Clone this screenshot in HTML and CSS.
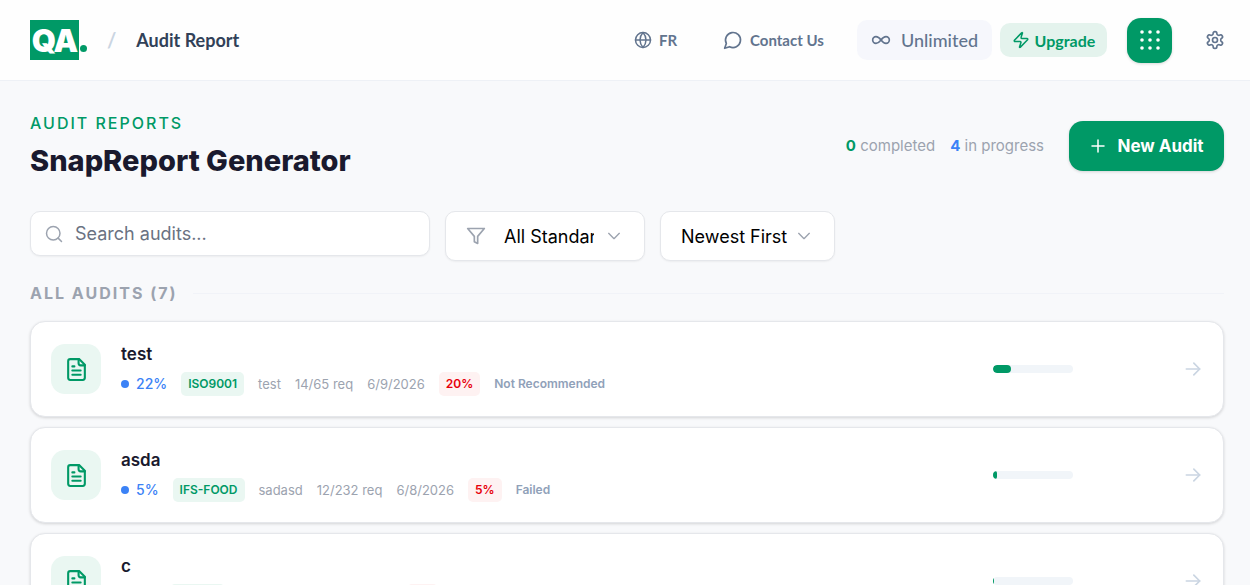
FILE: index.html
```html
<!DOCTYPE html>
<html lang="en">
<head>
    <meta charset="UTF-8">
    <meta name="viewport" content="width=device-width, initial-scale=1.0">
    <title>Audit Report</title>
    <link rel="stylesheet" href="styles.css">
</head>
<body>

    <!-- shared icons -->
    <svg class="sprite" aria-hidden="true">
        <symbol id="icon-file" viewBox="0 0 24 24">
            <path d="M14.5 2H6a2 2 0 0 0-2 2v16a2 2 0 0 0 2 2h12a2 2 0 0 0 2-2V7.500z"/>
            <path d="M14 2v4a2 2 0 0 0 2 2h4"/>
            <path d="M10 9H8"/>
            <path d="M16 13H8"/>
            <path d="M16 17H8"/>
        </symbol>
        <symbol id="icon-arrow" viewBox="0 0 24 24">
            <path d="M4 12h16"/>
            <path d="m13 5 7 7-7 7"/>
        </symbol>
        <symbol id="icon-chevron" viewBox="0 0 24 24">
            <path d="m4 8 8 8 8-8"/>
        </symbol>
    </svg>

    <header class="topbar">
        <a href="#" class="logo"><span class="logo-box">QA</span><span class="logo-dot"></span></a>
        <span class="slash">/</span>
        <span class="crumb">Audit Report</span>

        <nav class="topnav">
            <button type="button" class="nav-link lang">
                <svg class="icon" viewBox="0 0 24 24"><circle cx="12" cy="12" r="10"/><path d="M2 12h20"/><path d="M12 2a15 15 0 0 1 4 10 15 15 0 0 1-4 10 15 15 0 0 1-4-10 15 15 0 0 1 4-10z"/></svg>
                FR
            </button>
            <a href="#" class="nav-link contact">
                <svg class="icon" viewBox="0 0 24 24"><path d="M7.900 20A9 9 0 1 0 4 16.100L2 22Z"/></svg>
                Contact Us
            </a>
            <span class="plan">
                <svg class="icon" viewBox="0 0 24 24"><path d="M12 12c-2-2.670-4-4-6-4a4 4 0 1 0 0 8c2 0 4-1.330 6-4Zm0 0c2 2.670 4 4 6 4a4 4 0 0 0 0-8c-2 0-4 1.330-6 4Z"/></svg>
                Unlimited
            </span>
            <button type="button" class="upgrade">
                <svg class="icon" viewBox="0 0 24 24"><path d="M4 14a1 1 0 0 1-.780-1.630l9.900-10.200a.5.5 0 0 1 .860.460l-1.920 6.020A1 1 0 0 0 13 10h7a1 1 0 0 1 .780 1.630l-9.900 10.200a.5.5 0 0 1-.860-.460l1.920-6.020A1 1 0 0 0 11 14z"/></svg>
                Upgrade
            </button>
            <button type="button" class="apps" aria-label="Apps">
                <svg viewBox="0 0 20 20">
                    <circle cx="2" cy="2" r="1.800"/><circle cx="10" cy="2" r="1.800"/><circle cx="18" cy="2" r="1.800"/>
                    <circle cx="2" cy="10" r="1.800"/><circle cx="10" cy="10" r="1.800"/><circle cx="18" cy="10" r="1.800"/>
                    <circle cx="2" cy="18" r="1.800"/><circle cx="10" cy="18" r="1.800"/><circle cx="18" cy="18" r="1.800"/>
                </svg>
            </button>
            <button type="button" class="settings" aria-label="Settings">
                <svg class="icon" viewBox="0 0 24 24"><path d="M12.220 2h-.440a2 2 0 0 0-2 2v.180a2 2 0 0 1-1 1.730l-.430.250a2 2 0 0 1-2 0l-.150-.080a2 2 0 0 0-2.730.730l-.220.380a2 2 0 0 0 .730 2.730l.150.100a2 2 0 0 1 1 1.720v.510a2 2 0 0 1-1 1.740l-.150.090a2 2 0 0 0-.730 2.730l.220.380a2 2 0 0 0 2.730.730l.150-.080a2 2 0 0 1 2 0l.430.250a2 2 0 0 1 1 1.730V20a2 2 0 0 0 2 2h.440a2 2 0 0 0 2-2v-.180a2 2 0 0 1 1-1.730l.430-.250a2 2 0 0 1 2 0l.150.080a2 2 0 0 0 2.730-.730l.220-.390a2 2 0 0 0-.730-2.730l-.150-.080a2 2 0 0 1-1-1.740v-.500a2 2 0 0 1 1-1.740l.150-.090a2 2 0 0 0 .730-2.730l-.220-.380a2 2 0 0 0-2.730-.730l-.150.080a2 2 0 0 1-2 0l-.430-.250a2 2 0 0 1-1-1.730V4a2 2 0 0 0-2-2z"/><circle cx="12" cy="12" r="3"/></svg>
            </button>
        </nav>
    </header>

    <main>
        <div class="page-head">
            <div>
                <p class="eyebrow">Audit Reports</p>
                <h1>SnapReport Generator</h1>
            </div>
            <div class="head-actions">
                <span class="stat"><b class="done">0</b> completed</span>
                <span class="stat"><b class="progress">4</b> in progress</span>
                <button type="button" class="new-audit">
                    <svg class="icon" viewBox="0 0 24 24"><path d="M4 12h16M12 4v16"/></svg>
                    New Audit
                </button>
            </div>
        </div>

        <div class="filters">
            <label class="search">
                <svg class="icon" viewBox="0 0 24 24"><circle cx="11" cy="11" r="9"/><path d="m22 22-4.500-4.500"/></svg>
                <input type="text" placeholder="Search audits..." aria-label="Search audits">
            </label>
            <label class="select standard">
                <svg class="icon filter-icon" viewBox="0 0 24 24"><path d="M22 3H2l8 9.460V19l4 2v-8.540z"/></svg>
                <select aria-label="Standard">
                    <option>All Standards</option>
                </select>
                <svg class="icon chevron"><use href="#icon-chevron"/></svg>
            </label>
            <label class="select sort">
                <select aria-label="Sort order">
                    <option>Newest First</option>
                </select>
                <svg class="icon chevron"><use href="#icon-chevron"/></svg>
            </label>
        </div>

        <h2>All Audits (7)</h2>

        <div class="audit-list">
            <article class="audit">
                <div class="audit-icon"><svg class="icon"><use href="#icon-file"/></svg></div>
                <div class="audit-info">
                    <h3>test</h3>
                    <div class="meta">
                        <span class="percent">22%</span>
                        <span class="tag">ISO9001</span>
                        <span>test</span>
                        <span>14/65 req</span>
                        <span>6/9/2026</span>
                        <span class="tag score">20%</span>
                        <span class="verdict">Not Recommended</span>
                    </div>
                </div>
                <div class="bar"><div class="bar-fill" style="width: 22%"></div></div>
                <svg class="icon arrow"><use href="#icon-arrow"/></svg>
            </article>

            <article class="audit">
                <div class="audit-icon"><svg class="icon"><use href="#icon-file"/></svg></div>
                <div class="audit-info">
                    <h3>asda</h3>
                    <div class="meta">
                        <span class="percent">5%</span>
                        <span class="tag">IFS-FOOD</span>
                        <span>sadasd</span>
                        <span>12/232 req</span>
                        <span>6/8/2026</span>
                        <span class="tag score">5%</span>
                        <span class="verdict">Failed</span>
                    </div>
                </div>
                <div class="bar"><div class="bar-fill" style="width: 5%"></div></div>
                <svg class="icon arrow"><use href="#icon-arrow"/></svg>
            </article>

            <article class="audit">
                <div class="audit-icon"><svg class="icon"><use href="#icon-file"/></svg></div>
                <div class="audit-info">
                    <h3>c</h3>
                    <div class="meta">
                        <span class="percent">1%</span>
                        <span class="tag">BRCGS</span>
                        <span>c</span>
                        <span>2/230 req</span>
                        <span>6/8/2026</span>
                        <span class="tag score">1%</span>
                    </div>
                </div>
                <div class="bar"><div class="bar-fill" style="width: 1%"></div></div>
                <svg class="icon arrow"><use href="#icon-arrow"/></svg>
            </article>
        </div>
    </main>

</body>
</html>
```
FILE: styles.css
```css
* {
    box-sizing: border-box;
}

body {
    margin: 0;
    height: 100vh;
    overflow: hidden;
    font-family: Inter, "Open Sans", sans-serif;
    background-color: #f8f9fb;
    color: #1a1a2e;
}

h1, h2, h3, p {
    margin: 0;
}

button, input, select {
    font-family: inherit;
    border: none;
    padding: 0;
    background: none;
}

button {
    cursor: pointer;
}

a {
    text-decoration: none;
}

.sprite {
    display: none;
}

.icon {
    width: 20px;
    height: 20px;
    flex: none;
    fill: none;
    stroke: currentColor;
    stroke-width: 2;
    stroke-linecap: round;
    stroke-linejoin: round;
}

/* top bar */

.topbar {
    display: flex;
    align-items: center;
    height: 81px;
    padding: 0 25px 0 30px;
    background-color: #fefefe;
    border-bottom: 1px solid #eef1f6;
    font-family: Lato, sans-serif;
}

.logo {
    display: flex;
    align-items: flex-end;
}

.logo-box {
    width: 49px;
    height: 40px;
    background-color: #009966;
    color: #fff;
    font-family: Inter, sans-serif;
    font-size: 31px;
    font-weight: 900;
    line-height: 42px;
    letter-spacing: -1px;
    text-align: center;
}

.logo-dot {
    width: 7px;
    height: 7px;
    margin: 0 0 8px 1px;
    border-radius: 50%;
    background-color: #009966;
}

.slash {
    margin: 0 20px;
    font-size: 20px;
    font-weight: 700;
    color: #cad5e2;
}

.crumb {
    font-size: 18px;
    font-weight: 700;
    color: #314158;
}

.topnav {
    display: flex;
    align-items: center;
    margin-left: auto;
    color: #62748e;
}

.nav-link {
    display: flex;
    align-items: center;
    gap: 7px;
    font-family: inherit;
    font-size: 15px;
    font-weight: 700;
    color: #62748e;
}

.lang {
    width: 89px;
}

.contact {
    width: 134px;
}

.lang .icon {
    width: 18px;
    height: 18px;
}

.plan {
    display: flex;
    align-items: center;
    justify-content: center;
    gap: 10px;
    width: 135px;
    height: 40px;
    border-radius: 10px;
    background-color: #f6f7fc;
    font-size: 18px;
    font-weight: 500;
}

.upgrade {
    display: flex;
    align-items: center;
    justify-content: center;
    gap: 5px;
    width: 107px;
    height: 34px;
    margin-left: 8px;
    border-radius: 10px;
    background-color: #e4f3ed;
    color: #009966;
    font-size: 16px;
    font-weight: 700;
}

.upgrade .icon {
    width: 18px;
    height: 18px;
}

.apps {
    display: flex;
    align-items: center;
    justify-content: center;
    width: 45px;
    height: 45px;
    margin-left: 20px;
    border-radius: 14px;
    background-color: #009966;
    box-shadow: 0 1px 3px rgba(0, 0, 0, 0.15);
}

.apps svg {
    width: 20px;
    height: 20px;
    fill: #fff;
}

.settings {
    display: flex;
    margin-left: 33px;
    color: #62748e;
}

/* page heading */

main {
    padding: 30px 26px 0 30px;
}

.page-head {
    display: flex;
    align-items: center;
    justify-content: space-between;
}

.eyebrow {
    margin-bottom: 7px;
    font-size: 16px;
    font-weight: 500;
    line-height: 24px;
    letter-spacing: 2px;
    text-transform: uppercase;
    color: #009966;
}

h1 {
    font-size: 29px;
    font-weight: 800;
    line-height: 38px;
}

.head-actions {
    display: flex;
    align-items: center;
    gap: 15px;
}

.stat {
    font-size: 15px;
    color: #9ca3af;
}

.done {
    color: #009966;
}

.progress {
    color: #3b82f6;
}

.new-audit {
    display: flex;
    align-items: center;
    justify-content: center;
    gap: 10px;
    width: 155px;
    height: 50px;
    margin-left: 10px;
    border-radius: 14px;
    background-color: #009966;
    box-shadow: 0 1px 3px rgba(0, 0, 0, 0.15);
    color: #fff;
    font-size: 17px;
    font-weight: 700;
}

.new-audit .icon {
    width: 18px;
    height: 18px;
}

/* filters */

.filters {
    display: flex;
    align-items: flex-start;
    gap: 15px;
    margin-top: 31px;
}

.search,
.select {
    display: flex;
    align-items: center;
    border: 1px solid #e5e7eb;
    border-radius: 10px;
    background-color: #fff;
    box-shadow: 0 1px 2px rgba(0, 0, 0, 0.05);
    color: #9ca3af;
}

.search {
    gap: 12px;
    width: 400px;
    height: 45px;
    padding: 0 14px;
}

.search .icon {
    width: 18px;
    height: 18px;
}

.search input {
    flex: 1;
    min-width: 0;
    outline: none;
    font-size: 18px;
    color: #1a1a2e;
}

.search input::placeholder {
    color: #6a7282;
}

.select {
    height: 50px;
    padding: 0 20px;
}

.select select {
    flex: 1;
    min-width: 0;
    appearance: none;
    outline: none;
    font-size: 18px;
    color: #000;
}

.chevron {
    width: 16px;
    height: 16px;
    margin-left: 12px;
    margin-right: 2px;
}

.standard {
    width: 200px;
}

.standard select {
    margin-left: 18px;
}

.sort {
    width: 175px;
}

.sort .chevron {
    margin-left: 8px;
}

/* audit list */

h2 {
    display: flex;
    align-items: center;
    gap: 15px;
    margin: 21px 0 16px;
    font-size: 16px;
    font-weight: 700;
    line-height: 23px;
    letter-spacing: 2px;
    text-transform: uppercase;
    color: #9ca3af;
}

h2::after {
    content: "";
    flex: 1;
    height: 1px;
    background-color: #f1f3f8;
}

.audit-list {
    display: flex;
    flex-direction: column;
    gap: 10px;
}

.audit {
    display: flex;
    align-items: center;
    padding: 20px;
    border: 1px solid #e5e7eb;
    border-radius: 15px;
    background-color: #fff;
    box-shadow: 0 1px 3px rgba(0, 0, 0, 0.15);
}

.audit-icon {
    display: flex;
    align-items: center;
    justify-content: center;
    width: 50px;
    height: 50px;
    border-radius: 14px;
    background-color: #eaf7f2;
    color: #009966;
}

.audit-icon .icon {
    width: 25px;
    height: 25px;
}

.audit-info {
    flex: 1;
    margin-left: 20px;
}

h3 {
    margin-bottom: 5px;
    font-size: 17px;
    font-weight: 600;
    line-height: 25px;
}

.meta {
    display: flex;
    align-items: center;
    gap: 14px;
    font-size: 13px;
    line-height: 24px;
    color: #9ca3af;
}

.percent {
    display: flex;
    align-items: center;
    gap: 7px;
    font-size: 14px;
    font-weight: 500;
    color: #3b82f6;
}

.percent::before {
    content: "";
    width: 8px;
    height: 8px;
    border-radius: 50%;
    background-color: #3b82f6;
}

.tag {
    padding: 0 7px;
    border-radius: 5px;
    background-color: #eaf7f2;
    font-size: 12px;
    font-weight: 600;
    color: #009966;
}

.score {
    background-color: #fef2f2;
    color: #e7000b;
}

.verdict {
    font-size: 12px;
    font-weight: 600;
    color: #90a1b9;
}

.bar {
    width: 80px;
    height: 8px;
    margin-right: 110px;
    border-radius: 4px;
    background-color: #f1f5f9;
    overflow: hidden;
}

.bar-fill {
    height: 100%;
    border-radius: 4px;
    background-color: #009966;
}

.arrow {
    color: #cad5e2;
}
```
